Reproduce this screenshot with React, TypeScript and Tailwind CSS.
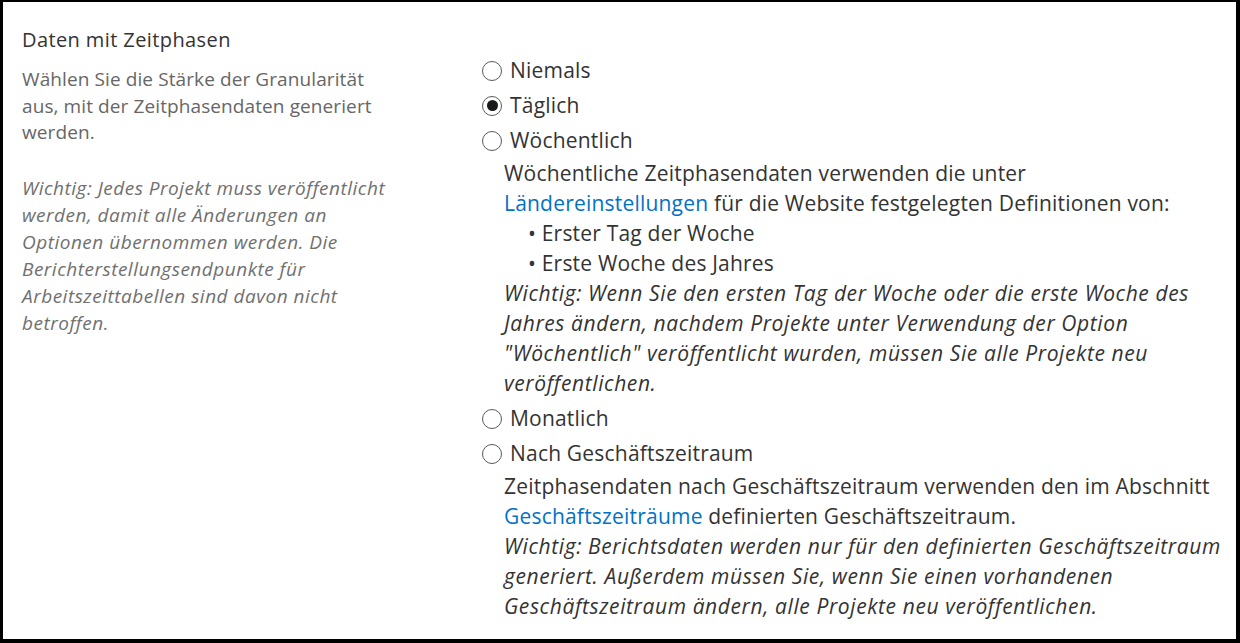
import React from "react";

const font = { fontFamily: '"Segoe UI", "Open Sans", "Noto Sans", sans-serif' };

function Radio({ checked, label }: { checked?: boolean; label: string }) {
  return (
    <div className="flex h-[35px] items-center">
      <span className="flex h-[20px] w-[20px] items-center justify-center rounded-full border-[1.5px] border-[#5a5a5a] bg-white">
        {checked && <span className="block h-[11px] w-[11px] rounded-full bg-[#1a1a1a]" />}
      </span>
      <span className="ml-[8px] text-[21px] tracking-[0.2px] text-[#333]">{label}</span>
    </div>
  );
}

export default function App() {
  return (
    <div
      className="flex h-[643px] w-[1240px] border-t-[2px] border-l-[3px] border-r-[4px] border-b-[4px] border-black bg-white"
      style={font}
    >
      <div className="w-[458px] shrink-0 pl-[19px] pt-[24px]">
        <div className="text-[20px] leading-[28px] tracking-[0.4px] text-[#333]">Daten mit Zeitphasen</div>
        <div className="mt-[12px] text-[19px] leading-[26.5px] tracking-[0.1px] text-[#666]">
          Wählen Sie die Stärke der Granularität
          <br />
          aus, mit der Zeitphasendaten generiert
          <br />
          werden.
        </div>
        <div className="mt-[29px] text-[19px] italic leading-[27px] tracking-[0.5px] text-[#707070]">
          Wichtig: Jedes Projekt muss veröffentlicht
          <br />
          werden, damit alle Änderungen an
          <br />
          Optionen übernommen werden. Die
          <br />
          Berichterstellungsendpunkte für
          <br />
          Arbeitszeittabellen sind davon nicht
          <br />
          betroffen.
        </div>
      </div>
      <div className="flex-1 pl-[21px] pt-[51px]">
        <Radio label="Niemals" />
        <Radio checked label="Täglich" />
        <Radio label="Wöchentlich" />
        <div className="pl-[22px] text-[21px] leading-[30px] tracking-[0.2px] text-[#333]">
          <div>Wöchentliche Zeitphasendaten verwenden die unter</div>
          <div>
            <span className="text-[#0072c6]">Ländereinstellungen</span> für die Website festgelegten Definitionen von:
          </div>
          <div className="pl-[24px]">• Erster Tag der Woche</div>
          <div className="pl-[24px]">• Erste Woche des Jahres</div>
          <div className="italic tracking-[0.6px]">
            Wichtig: Wenn Sie den ersten Tag der Woche oder die erste Woche des
            <br />
            Jahres ändern, nachdem Projekte unter Verwendung der Option
            <br />
            "Wöchentlich" veröffentlicht wurden, müssen Sie alle Projekte neu
            <br />
            veröffentlichen.
          </div>
        </div>
        <div className="mt-[3px]">
          <Radio label="Monatlich" />
          <Radio label="Nach Geschäftszeitraum" />
        </div>
        <div className="pl-[22px] text-[21px] leading-[30px] tracking-[0.2px] text-[#333]">
          <div>Zeitphasendaten nach Geschäftszeitraum verwenden den im Abschnitt</div>
          <div>
            <span className="text-[#0072c6]">Geschäftszeiträume</span> definierten Geschäftszeitraum.
          </div>
          <div className="italic tracking-[0.6px]">
            Wichtig: Berichtsdaten werden nur für den definierten Geschäftszeitraum
            <br />
            generiert. Außerdem müssen Sie, wenn Sie einen vorhandenen
            <br />
            Geschäftszeitraum ändern, alle Projekte neu veröffentlichen.
          </div>
        </div>
      </div>
    </div>
  );
}
